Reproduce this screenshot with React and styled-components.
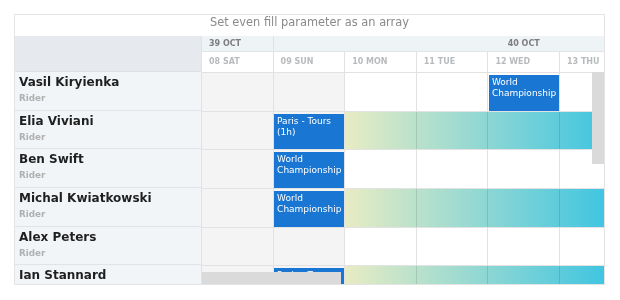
import React from "react";
import styled, { createGlobalStyle } from "styled-components";

const COL = 71.6;
const ROW = 38.7;

const days = ["08 SAT", "09 SUN", "10 MON", "11 TUE", "12 WED", "13 THU"];

const riders = [
  { name: "Vasil Kiryienka", events: [{ col: 4, lines: ["World", "Championship"] }] },
  { name: "Elia Viviani", events: [{ col: 1, lines: ["Paris - Tours", "(1h)"] }], fill: true },
  { name: "Ben Swift", events: [{ col: 1, lines: ["World", "Championship"] }] },
  { name: "Michal Kwiatkowski", events: [{ col: 1, lines: ["World", "Championship"] }], fill: true },
  { name: "Alex Peters", events: [] },
  { name: "Ian Stannard", events: [{ col: 1, lines: ["Paris - Tours", "(1h)"] }], fill: true },
];

const GlobalStyle = createGlobalStyle`
  body {
    margin: 0;
    background: #fff;
    font-family: "DejaVu Sans", Verdana, sans-serif;
  }
`;

const Page = styled.div`
  padding: 14px 15px 0 14px;
`;

const Scheduler = styled.div`
  position: relative;
  width: 591px;
  height: 271px;
  box-sizing: border-box;
  border: 1px solid #e4e4e4;
  overflow: hidden;
  display: flex;
  flex-direction: column;
`;

const Title = styled.div`
  height: 21px;
  line-height: 15px;
  text-align: center;
  font-size: 11.4px;
  color: #8a8a8a;
`;

const Body = styled.div`
  display: flex;
  flex: 1;
  min-height: 0;
`;

const Resources = styled.div`
  width: 186px;
  flex-shrink: 0;
  background: #f2f5f8;
  border-right: 1px solid #e0e3e6;
`;

const ResourceHead = styled.div`
  height: 35px;
  background: #e6e9ed;
  border-bottom: 1px solid #dde1e5;
`;

const Resource = styled.div`
  height: ${ROW}px;
  box-sizing: border-box;
  padding: 3px 4px 0;
  border-bottom: 1px solid #e0e4e8;
`;

const Name = styled.div`
  font-size: 12px;
  line-height: 14px;
  font-weight: bold;
  color: #1f1f1f;
`;

const Role = styled.div`
  margin-top: 3px;
  font-size: 8.8px;
  line-height: 12px;
  font-weight: bold;
  color: #b0b0b0;
`;

const Timeline = styled.div`
  position: relative;
  flex: 1;
  overflow: hidden;
`;

const DateRow = styled.div`
  display: flex;
  height: 15px;
  background: #eef3f6;
  border-bottom: 1px solid #e2e5e8;
`;

const DateCell = styled.div`
  flex: 0 0 ${(p) => p.$span * COL}px;
  box-sizing: border-box;
  padding: 0 7px;
  border-right: 1px solid #e0e3e6;
  font-size: 8px;
  line-height: 15px;
  font-weight: bold;
  color: #7d7d7d;
  text-align: ${(p) => (p.$center ? "center" : "left")};
`;

const Grid = styled.div`
  display: grid;
  grid-template-columns: repeat(6, ${COL}px);
`;

const DayRow = styled(Grid)`
  height: 20px;
  border-bottom: 1px solid #e2e2e2;
`;

const DayCell = styled.div`
  box-sizing: border-box;
  padding-left: 7px;
  border-right: 1px solid #e2e2e2;
  font-size: 8px;
  line-height: 20px;
  font-weight: bold;
  color: #b8bbbe;
  white-space: nowrap;
`;

const Row = styled(Grid)`
  position: relative;
  height: ${ROW}px;
`;

const Cell = styled.div`
  box-sizing: border-box;
  border-right: 1px solid #e2e2e2;
  border-bottom: 1px solid #e2e2e2;
  background: ${(p) => (p.$weekend ? "#f4f4f4" : "#fff")};
`;

const Fill = styled.div`
  position: absolute;
  left: ${2 * COL}px;
  right: 0;
  top: 0;
  bottom: 1px;
  background: linear-gradient(to right, #e8ecc3, #41c5e1);
  mix-blend-mode: multiply;
`;

const Event = styled.div`
  position: absolute;
  top: 2px;
  bottom: 1px;
  width: ${COL - 1.5}px;
  box-sizing: border-box;
  padding: 2px 3px;
  background: #1976d2;
  color: #fff;
  font-size: 9px;
  line-height: 11px;
  overflow: hidden;
`;

const Thumb = styled.div`
  position: absolute;
  background: #dadada;
`;

const VThumb = styled(Thumb)`
  right: 0;
  top: 36px;
  width: 12px;
  height: 92px;
`;

const HThumb = styled(Thumb)`
  left: 0;
  bottom: 0;
  width: 139px;
  height: 12px;
`;

export default function App() {
  return (
    <Page>
      <GlobalStyle />
      <Scheduler>
        <Title>Set even fill parameter as an array</Title>
        <Body>
          <Resources>
            <ResourceHead />
            {riders.map((r) => (
              <Resource key={r.name}>
                <Name>{r.name}</Name>
                <Role>Rider</Role>
              </Resource>
            ))}
          </Resources>
          <Timeline>
            <DateRow>
              <DateCell $span={1}>39 OCT</DateCell>
              <DateCell $span={7} $center>
                40 OCT
              </DateCell>
            </DateRow>
            <DayRow>
              {days.map((d) => (
                <DayCell key={d}>{d}</DayCell>
              ))}
            </DayRow>
            {riders.map((r) => (
              <Row key={r.name}>
                {days.map((d, i) => (
                  <Cell key={d} $weekend={i < 2} />
                ))}
                {r.fill && <Fill />}
                {r.events.map((e) => (
                  <Event key={e.col} style={{ left: e.col * COL + 0.5 }}>
                    {e.lines.map((l) => (
                      <div key={l}>{l}</div>
                    ))}
                  </Event>
                ))}
              </Row>
            ))}
            <VThumb />
            <HThumb />
          </Timeline>
        </Body>
      </Scheduler>
    </Page>
  );
}
